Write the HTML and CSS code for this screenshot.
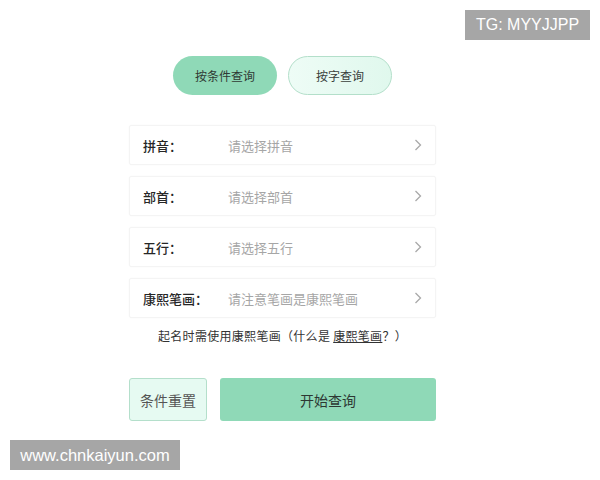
FILE: index.html
```html
<!DOCTYPE html>
<html lang="zh">
<head>
<meta charset="utf-8">
<link rel="stylesheet" href="styles.css">
</head>
<body>
<div class="page">
  <div class="tabs">
    <div class="tab tab-active">按条件查询</div>
    <div class="tab tab-idle">按字查询</div>
  </div>
  <div class="rows">
    <div class="row"><span class="label">拼音：</span><span class="ph">请选择拼音</span><svg class="chev" width="8" height="12" viewBox="0 0 8 12"><polyline points="1.5,1 6.5,6 1.5,11" fill="none" stroke="#a9a9a9" stroke-width="1.3"/></svg></div>
    <div class="row"><span class="label">部首：</span><span class="ph">请选择部首</span><svg class="chev" width="8" height="12" viewBox="0 0 8 12"><polyline points="1.5,1 6.5,6 1.5,11" fill="none" stroke="#a9a9a9" stroke-width="1.3"/></svg></div>
    <div class="row"><span class="label">五行：</span><span class="ph">请选择五行</span><svg class="chev" width="8" height="12" viewBox="0 0 8 12"><polyline points="1.5,1 6.5,6 1.5,11" fill="none" stroke="#a9a9a9" stroke-width="1.3"/></svg></div>
    <div class="row"><span class="label">康熙笔画：</span><span class="ph">请注意笔画是康熙笔画</span><svg class="chev" width="8" height="12" viewBox="0 0 8 12"><polyline points="1.5,1 6.5,6 1.5,11" fill="none" stroke="#a9a9a9" stroke-width="1.3"/></svg></div>
  </div>
  <p class="note">起名时需使用康熙笔画（什么是 <span class="link">康熙笔画</span>？）</p>
  <div class="actions">
    <div class="btn btn-reset">条件重置</div>
    <div class="btn btn-go">开始查询</div>
  </div>
</div>
<div class="wm wm-tg">TG: MYYJJPP</div>
<div class="wm wm-site">www.chnkaiyun.com</div>
</body>
</html>
```
FILE: styles.css
```css
html, body {
  margin: 0;
  padding: 0;
  background: #ffffff;
}
body {
  width: 600px;
  height: 480px;
  position: relative;
  overflow: hidden;
  font-family: "Noto Sans CJK SC", "Noto Sans", sans-serif;
  color: #333;
}
.page {
  margin-left: 129px;
  width: 307px;
  padding-top: 56px;
}
.tabs {
  display: flex;
  justify-content: center;
  gap: 11px;
}
.tab {
  width: 104px;
  height: 39px;
  box-sizing: border-box;
  border-radius: 20px;
  display: flex;
  align-items: center;
  justify-content: center;
  font-size: 12px;
  color: #2f3a34;
}
.tab-active {
  background: #8fd9b7;
}
.tab-idle {
  background: linear-gradient(90deg, #eefcf6, #e0f8ed);
  border: 1px solid #b3dfca;
  color: #3a3f3c;
}
.rows {
  margin-top: 30px;
  display: flex;
  flex-direction: column;
  gap: 11px;
}
.row {
  height: 40px;
  box-sizing: border-box;
  border: 1px solid #f4f4f4;
  border-radius: 2px;
  box-shadow: 0 0 2px rgba(0,0,0,0.03);
  display: flex;
  align-items: center;
  padding: 0 13px 0 13px;
}
.label {
  width: 85px;
  font-size: 13px;
  font-weight: 500;
  color: #262626;
}
.ph {
  flex: 1;
  font-size: 13px;
  color: #a6a6a6;
}
.chev {
  display: block;
}
.note {
  margin: 9px 0 0 0;
  text-align: center;
  font-size: 12px;
  line-height: 18px;
  color: #333;
  letter-spacing: 0.3px;
}
.link {
  text-decoration: underline;
}
.actions {
  margin-top: 33px;
  display: flex;
  gap: 13px;
}
.btn {
  height: 43px;
  box-sizing: border-box;
  border-radius: 3px;
  display: flex;
  align-items: center;
  justify-content: center;
  font-size: 14px;
}
.btn-reset {
  width: 78px;
  background: #e6faf2;
  border: 1px solid #b4dfcb;
  color: #555;
}
.btn-go {
  flex: 1;
  background: #8fd9b7;
  color: #2d3833;
}
.wm {
  position: absolute;
  background: #a6a6a6;
  color: #fff;
  font-family: "Liberation Sans", Arial, sans-serif;
  display: flex;
  align-items: center;
  justify-content: center;
}
.wm-tg {
  left: 465px;
  top: 10px;
  width: 125px;
  height: 30px;
  font-size: 16px;
}
.wm-site {
  left: 10px;
  top: 440px;
  width: 170px;
  height: 30px;
  font-size: 16.5px;
}
```
